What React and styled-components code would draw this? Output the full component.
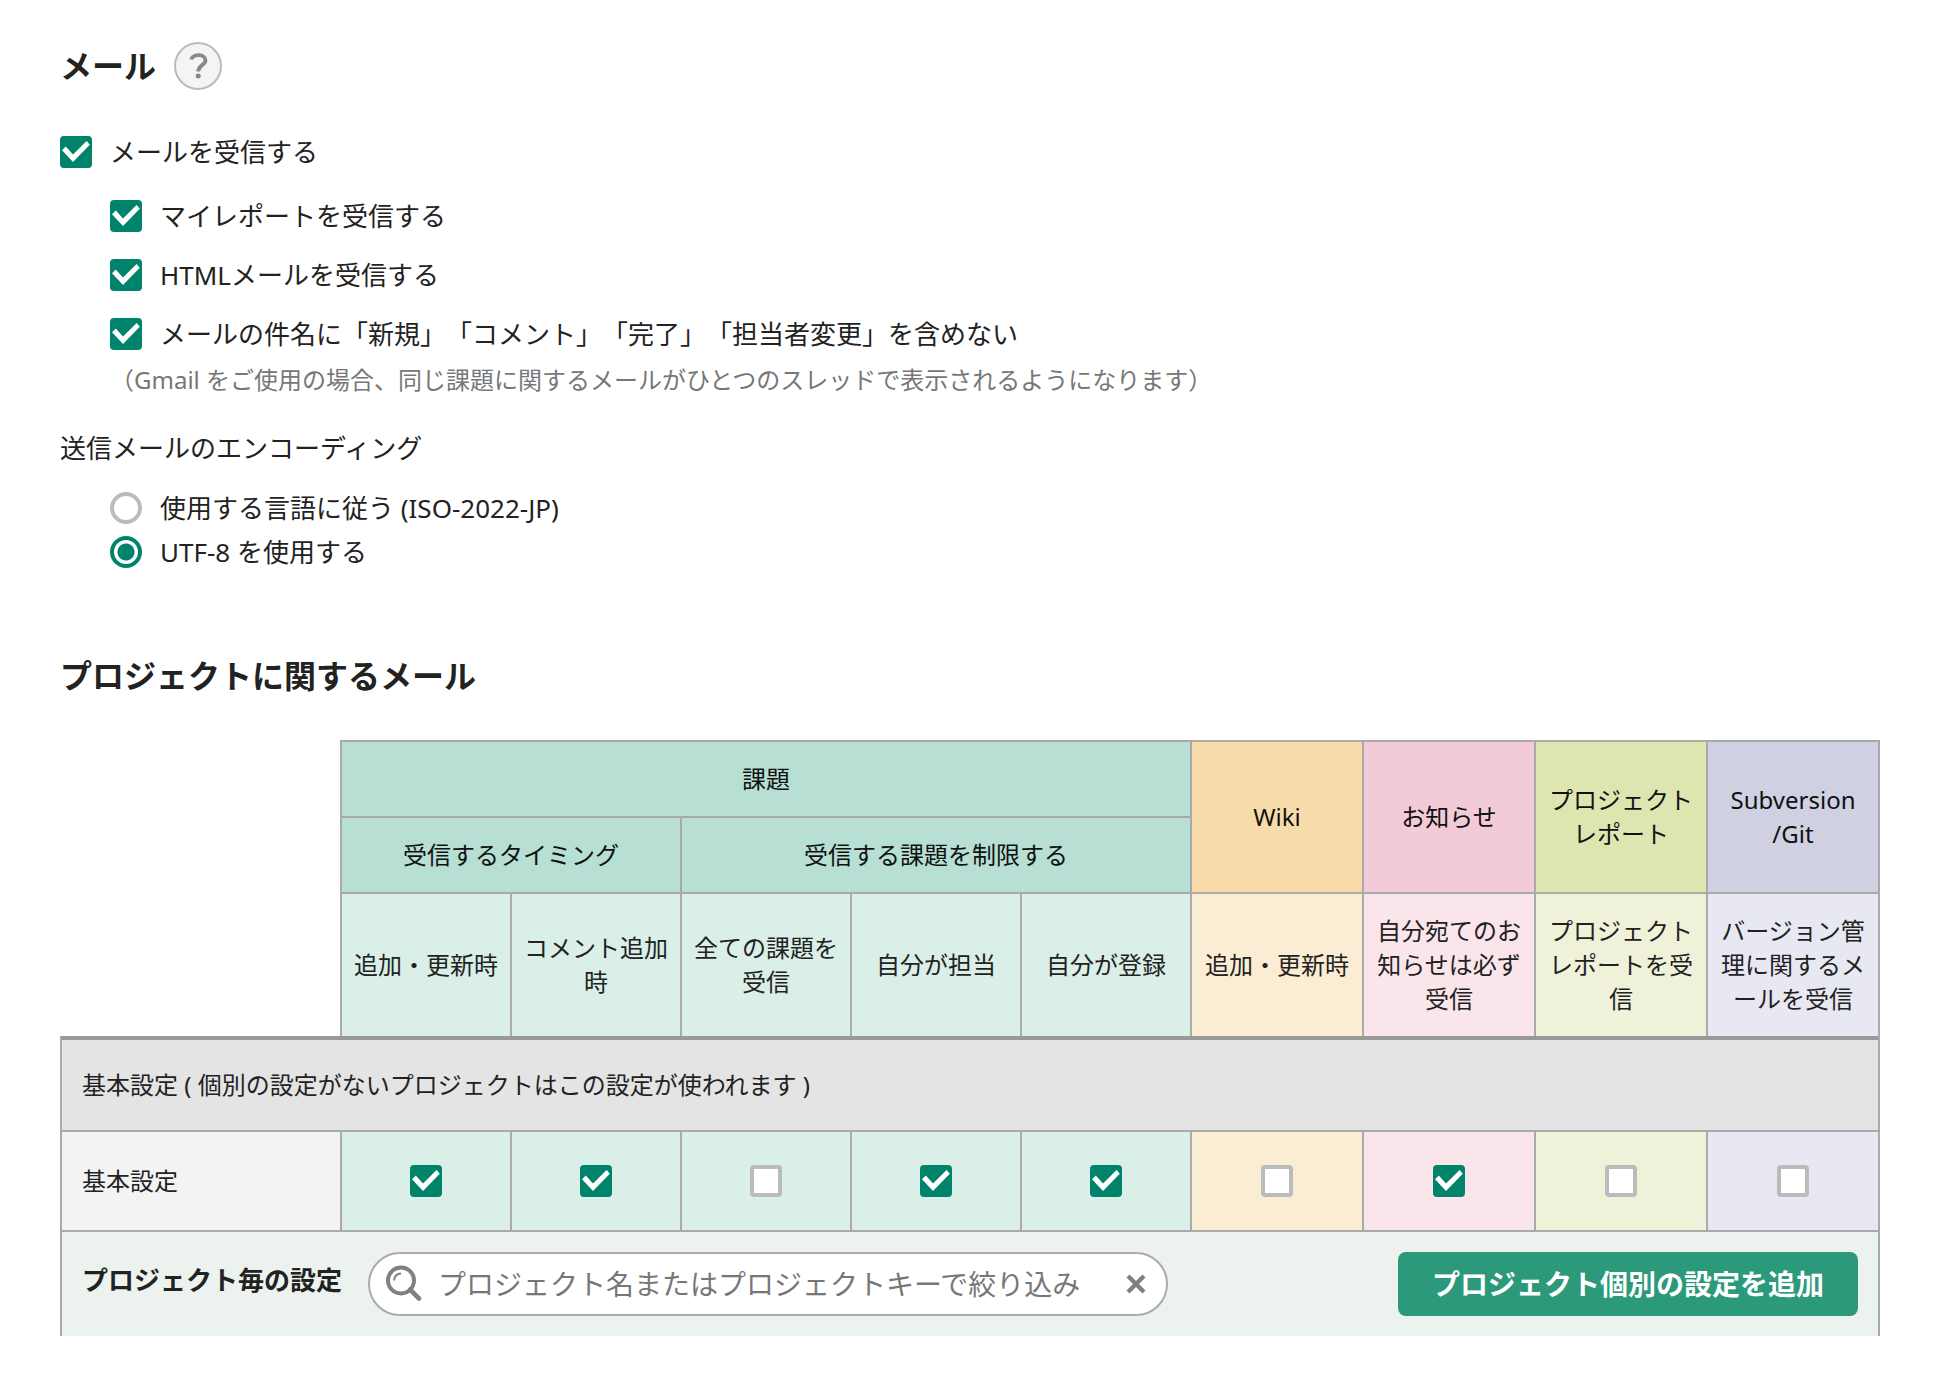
import React, { useState } from 'react';
import styled, { createGlobalStyle } from 'styled-components';

const GlobalStyle = createGlobalStyle`
  *, *::before, *::after {
    box-sizing: border-box;
  }
  body {
    margin: 0;
    background: #fff;
    color: #222;
    font-family: 'Noto Sans', 'Noto Sans CJK JP', sans-serif;
    font-size: 26px;
    line-height: 44px;
    text-spacing-trim: space-all;
  }
  input, button {
    font-family: inherit;
  }
`;

const palette = {
  issue: { head: '#b7dfd4', cell: '#daefe7' },
  wiki: { head: '#f7dbab', cell: '#fbedd3' },
  news: { head: '#f3cbd8', cell: '#fae5eb' },
  report: { head: '#dde5b0', cell: '#eff1d9' },
  vcs: { head: '#cfd1e3', cell: '#e8e8f2' },
};

const columns = [
  { id: 'issueUpdate', label: '追加・更新時', tone: 'issue', checked: true },
  { id: 'issueComment', label: 'コメント追加時', tone: 'issue', checked: true },
  { id: 'issueAll', label: '全ての課題を受信', tone: 'issue', checked: false },
  { id: 'issueAssigned', label: '自分が担当', tone: 'issue', checked: true },
  { id: 'issueCreated', label: '自分が登録', tone: 'issue', checked: true },
  { id: 'wiki', label: '追加・更新時', tone: 'wiki', checked: false },
  { id: 'news', label: '自分宛てのお知らせは必ず受信', tone: 'news', checked: true },
  { id: 'report', label: 'プロジェクトレポートを受信', tone: 'report', checked: false },
  { id: 'vcs', label: 'バージョン管理に関するメールを受信', tone: 'vcs', checked: false },
];

const Page = styled.main`
  padding: 40px 60px;
`;

const TitleRow = styled.div`
  display: flex;
  align-items: center;
  gap: 18px;
  height: 52px;
`;

const Heading = styled.h2`
  margin: 0;
  font-size: 32px;
  line-height: 48px;
  font-weight: 700;
`;

const HelpButton = styled.button`
  width: 48px;
  height: 48px;
  padding: 0;
  display: flex;
  align-items: center;
  justify-content: center;
  border: 2px solid #bbb;
  border-radius: 50%;
  background: #f4f4f4;
  color: #888;
`;

const Options = styled.div`
  display: flex;
  flex-direction: column;
  gap: 14px;
  margin-top: 38px;
`;

const SubOptions = styled.div`
  display: flex;
  flex-direction: column;
  gap: ${({ $gap }) => $gap}px;
  margin-top: ${({ $top }) => $top}px;
  padding-left: 50px;
`;

const OptionLabel = styled.label`
  display: flex;
  align-items: center;
  gap: 18px;
`;

const CheckWrap = styled.span`
  display: grid;
  flex: none;
  width: 32px;
  height: 32px;

  > * {
    grid-area: 1 / 1;
  }
  svg {
    pointer-events: none;
  }
`;

const CheckInput = styled.input`
  appearance: none;
  width: 32px;
  height: 32px;
  margin: 0;
  border: 4px solid #bbb;
  border-radius: 4px;
  background: #fff;

  &:checked {
    border-color: #00836b;
    background: #00836b;
  }
`;

const Radio = styled.input`
  appearance: none;
  flex: none;
  width: 32px;
  height: 32px;
  margin: 0;
  border: 4px solid #bbb;
  border-radius: 50%;
  background: #fff;

  &:checked {
    border-color: #00836b;
    background: radial-gradient(circle, #00836b 8px, #fff 9px);
  }
`;

const Note = styled.p`
  margin: 0;
  padding-left: 50px;
  color: #777;
  font-size: 24px;
  line-height: 48px;
`;

const Encoding = styled.fieldset`
  margin: 22px 0 0;
  padding: 0;
  border: none;

  legend {
    padding: 0;
  }
`;

const ProjectSection = styled.section`
  margin-top: 78px;
`;

const MailTable = styled.table`
  width: 100%;
  margin-top: 40px;
  table-layout: fixed;
  border-collapse: separate;
  border-spacing: 0;
  border-right: 2px solid #aaa;
  font-size: 24px;
  line-height: 34px;

  th, td {
    border: 0 solid #aaa;
    border-width: 2px 0 0 2px;
    font-weight: 400;
  }
`;

const Column = styled.col`
  width: ${({ $width }) => $width}px;
`;

const Corner = styled.td`
  && {
    border: none;
  }
`;

const GroupHead = styled.th`
  padding: 20px 10px;
  background: ${({ $tone }) => palette[$tone].head};
  color: #111;
`;

const ColumnHead = styled.th`
  padding: 20px 10px;
  background: ${({ $tone }) => palette[$tone].cell};
  line-break: loose;
`;

const BandCell = styled.th`
  padding: 28px 20px;
  background: #e4e4e4;
  text-align: left;

  && {
    border-top: 4px solid #999;
  }
`;

const RowHead = styled.th`
  padding: 32px 20px;
  background: #f3f3f3;
  text-align: left;
`;

const SettingCell = styled.td`
  padding: 0;
  background: ${({ $tone }) => palette[$tone].cell};

  ${CheckWrap} {
    margin: 0 auto;
  }
`;

const ToolbarCell = styled.td`
  padding: 20px;
  background: #ecf3ee;
`;

const Toolbar = styled.div`
  display: flex;
  align-items: center;
`;

const ToolbarTitle = styled.h3`
  margin: 0 26px 0 0;
  padding-bottom: 8px;
  font-size: 26px;
  line-height: 34px;
  font-weight: 700;
`;

const SearchBox = styled.div`
  display: flex;
  align-items: center;
  flex: 0 1 800px;
  height: 64px;
  padding: 0 18px 0 14px;
  border: 2px solid #aaa;
  border-radius: 32px;
  background: #fff;
  color: #808080;

  svg {
    flex: none;
  }
`;

const SearchInput = styled.input`
  flex: 1;
  min-width: 0;
  height: 44px;
  margin-left: 14px;
  padding: 0;
  border: none;
  outline: none;
  background: none;
  color: #222;
  font-size: 28px;

  &::placeholder {
    color: #777;
    opacity: 1;
  }
`;

const ClearButton = styled.button`
  display: flex;
  padding: 0;
  border: none;
  background: none;
  color: inherit;
`;

const AddButton = styled.button`
  height: 64px;
  margin-left: auto;
  padding: 0 34px 2px;
  border: none;
  border-radius: 8px;
  background: #2c9a7a;
  color: #fff;
  font-size: 28px;
  font-weight: 700;
  white-space: nowrap;
`;

function CheckBox({ checked, onChange, label }) {
  return (
    <CheckWrap>
      <CheckInput type="checkbox" checked={checked} onChange={onChange} aria-label={label} />
      {checked && (
        <svg width="32" height="32" viewBox="0 0 32 32">
          <path d="M2 14.2 L5.8 10.6 L13 18.4 L26.6 5 L29.8 8.8 L13 26 Z" fill="#fff" />
        </svg>
      )}
    </CheckWrap>
  );
}

function Option({ label, defaultChecked }) {
  const [checked, setChecked] = useState(defaultChecked);
  return (
    <OptionLabel>
      <CheckBox checked={checked} onChange={() => setChecked(!checked)} />
      {label}
    </OptionLabel>
  );
}

function ProjectSearch() {
  const [keyword, setKeyword] = useState('');
  return (
    <SearchBox>
      <svg width="40" height="40" viewBox="0 0 40 40" fill="none" stroke="currentColor">
        <circle cx="17" cy="16.5" r="13" strokeWidth="4" />
        <path d="M26 25.5 L35 34.5" strokeWidth="4.6" strokeLinecap="round" />
        <path d="M10 16.5 A7 7 0 0 1 17 9.5" strokeWidth="2" />
      </svg>
      <SearchInput
        type="text"
        aria-label="プロジェクト名またはプロジェクトキーで絞り込み"
        placeholder="プロジェクト名またはプロジェクトキーで絞り込み"
        value={keyword}
        onChange={(e) => setKeyword(e.target.value)}
      />
      <ClearButton type="button" aria-label="クリア" onClick={() => setKeyword('')}>
        <svg width="24" height="24" viewBox="0 0 24 24" fill="none" stroke="currentColor">
          <path d="M4 4 L20 20 M20 4 L4 20" strokeWidth="4.4" />
        </svg>
      </ClearButton>
    </SearchBox>
  );
}

export default function App() {
  const [encoding, setEncoding] = useState('utf8');
  const [settings, setSettings] = useState(
    Object.fromEntries(columns.map((c) => [c.id, c.checked])),
  );

  const toggleSetting = (id) => setSettings({ ...settings, [id]: !settings[id] });

  return (
    <>
      <GlobalStyle />
      <Page lang="ja">
        <TitleRow>
          <Heading>メール</Heading>
          <HelpButton type="button" aria-label="ヘルプ">
            <svg width="24" height="32" viewBox="0 0 24 32" fill="none">
              <path
                d="M5.5 9.5 C6.5 3.4 19.5 3.4 19.5 10.4 C19.5 15 12.2 15 12.2 21.6"
                stroke="currentColor"
                strokeWidth="3.8"
              />
              <circle cx="12.2" cy="26" r="2.5" fill="currentColor" />
            </svg>
          </HelpButton>
        </TitleRow>

        <Options>
          <Option label="メールを受信する" defaultChecked />
        </Options>
        <SubOptions $gap={15} $top={20}>
          <Option label="マイレポートを受信する" defaultChecked />
          <Option label="HTMLメールを受信する" defaultChecked />
          <Option label="メールの件名に「新規」「コメント」「完了」「担当者変更」を含めない" defaultChecked />
        </SubOptions>
        <Note>（Gmail をご使用の場合、同じ課題に関するメールがひとつのスレッドで表示されるようになります）</Note>

        <Encoding>
          <legend>送信メールのエンコーディング</legend>
          <SubOptions $gap={0} $top={16}>
            <OptionLabel>
              <Radio
                type="radio"
                name="encoding"
                checked={encoding === 'iso'}
                onChange={() => setEncoding('iso')}
              />
              使用する言語に従う (ISO-2022-JP)
            </OptionLabel>
            <OptionLabel>
              <Radio
                type="radio"
                name="encoding"
                checked={encoding === 'utf8'}
                onChange={() => setEncoding('utf8')}
              />
              UTF-8 を使用する
            </OptionLabel>
          </SubOptions>
        </Encoding>

        <ProjectSection>
          <Heading>プロジェクトに関するメール</Heading>
          <MailTable>
            <colgroup>
              <Column $width={280} />
              {columns.map((c) => (
                <Column key={c.id} $width={c.tone === 'issue' ? 170 : 172} />
              ))}
            </colgroup>
            <thead>
              <tr>
                <Corner rowSpan={3} />
                <GroupHead colSpan={5} $tone="issue">課題</GroupHead>
                <GroupHead rowSpan={2} $tone="wiki">Wiki</GroupHead>
                <GroupHead rowSpan={2} $tone="news">お知らせ</GroupHead>
                <GroupHead rowSpan={2} $tone="report">プロジェクトレポート</GroupHead>
                <GroupHead rowSpan={2} $tone="vcs">
                  Subversion
                  <br />
                  /Git
                </GroupHead>
              </tr>
              <tr>
                <GroupHead colSpan={2} $tone="issue">受信するタイミング</GroupHead>
                <GroupHead colSpan={3} $tone="issue">受信する課題を制限する</GroupHead>
              </tr>
              <tr>
                {columns.map((c) => (
                  <ColumnHead key={c.id} $tone={c.tone}>{c.label}</ColumnHead>
                ))}
              </tr>
            </thead>
            <tbody>
              <tr>
                <BandCell colSpan={10}>基本設定 ( 個別の設定がないプロジェクトはこの設定が使われます )</BandCell>
              </tr>
              <tr>
                <RowHead>基本設定</RowHead>
                {columns.map((c) => (
                  <SettingCell key={c.id} $tone={c.tone}>
                    <CheckBox
                      label={c.label}
                      checked={settings[c.id]}
                      onChange={() => toggleSetting(c.id)}
                    />
                  </SettingCell>
                ))}
              </tr>
              <tr>
                <ToolbarCell colSpan={10}>
                  <Toolbar>
                    <ToolbarTitle>プロジェクト毎の設定</ToolbarTitle>
                    <ProjectSearch />
                    <AddButton type="button">プロジェクト個別の設定を追加</AddButton>
                  </Toolbar>
                </ToolbarCell>
              </tr>
            </tbody>
          </MailTable>
        </ProjectSection>
      </Page>
    </>
  );
}
